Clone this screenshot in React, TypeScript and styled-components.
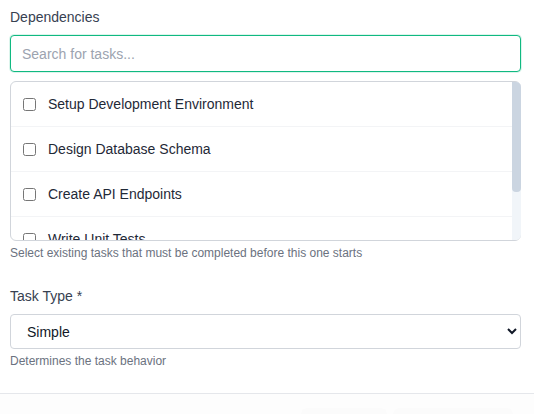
import React from "react";
import styled, { createGlobalStyle } from "styled-components";

const Global = createGlobalStyle`
  html, body { margin: 0; padding: 0; background: #ffffff; }
  body { font-family: "Liberation Sans", Arial, sans-serif; overflow: hidden; }
  * { box-sizing: border-box; }
`;

const Page = styled.div`
  width: 534px;
  height: 414px;
  display: flex;
  flex-direction: column;
  overflow: hidden;
`;

const Body = styled.div`
  padding: 7px 13px 0 10px;
  display: flex;
  flex-direction: column;
`;

const Field = styled.div<{ $mb?: number }>`
  display: flex;
  flex-direction: column;
  margin-bottom: ${(p) => p.$mb ?? 0}px;
`;

const Label = styled.label`
  font-size: 14px;
  line-height: 20px;
  color: #374151;
  margin-bottom: 8px;
`;

const SearchInput = styled.input`
  height: 37px;
  border: 1px solid #10b981;
  border-radius: 4px;
  padding: 0 11px;
  font-family: inherit;
  font-size: 14px;
  color: #111827;
  outline: none;
  box-shadow: 0 0 0 1px rgba(16, 185, 129, 0.15);
  &::placeholder { color: #9ca3af; }
`;

const ListWrap = styled.div`
  position: relative;
  margin-top: 9px;
  height: 160px;
`;

const List = styled.div`
  height: 100%;
  border: 1px solid #d1d5db;
  border-radius: 6px;
  overflow-y: auto;
  scrollbar-width: none;
  &::-webkit-scrollbar { display: none; }
`;

const Track = styled.div`
  position: absolute;
  top: 1px;
  right: 0;
  bottom: 1px;
  width: 9px;
  background: #f1f5f9;
  border-radius: 0 5px 5px 0;
`;

const Thumb = styled.div`
  width: 100%;
  background: #cbd5e1;
  border-radius: 0 5px 4px 4px;
`;

const Row = styled.label`
  display: flex;
  align-items: center;
  gap: 12px;
  height: 45px;
  padding: 0 12px;
  border-bottom: 1px solid #f3f4f6;
  font-size: 14px;
  color: #1f2937;
  cursor: pointer;
  &:last-child { border-bottom: none; }
`;

const Check = styled.input`
  width: 13px;
  height: 13px;
  margin: 0;
  flex: none;
`;

const Help = styled.div`
  font-size: 12px;
  line-height: 16px;
  color: #6b7280;
  margin-top: 4px;
`;

const Select = styled.select`
  height: 35px;
  border: 1px solid #d1d5db;
  border-radius: 4px;
  padding: 0 8px 0 12px;
  font-family: inherit;
  font-size: 14px;
  color: #111827;
  background: #ffffff;
  outline: none;
`;

const Footer = styled.div`
  margin-top: auto;
  border-top: 1px solid #e5e7eb;
  background: #fdfdfd;
  height: 21px;
  display: flex;
  justify-content: flex-end;
  align-items: flex-start;
  gap: 6px;
  padding: 14px 21px 0 0;
`;

const GhostButton = styled.div<{ $w: number }>`
  width: ${(p) => p.$w}px;
  height: 20px;
  border-radius: 6px;
  background: #fbfbfb;
`;

const tasks = [
  "Setup Development Environment",
  "Design Database Schema",
  "Create API Endpoints",
  "Write Unit Tests",
  "Deploy to Staging",
];

export default function App() {
  return (
    <Page>
      <Global />
      <Body>
        <Field $mb={25}>
          <Label>Dependencies</Label>
          <SearchInput placeholder="Search for tasks..." />
          <ListWrap>
            <List>
              {tasks.map((t) => (
                <Row key={t}>
                  <Check type="checkbox" />
                  {t}
                </Row>
              ))}
            </List>
            <Track>
              <Thumb style={{ height: `${Math.round((158 * 158) / 226)}px` }} />
            </Track>
          </ListWrap>
          <Help>Select existing tasks that must be completed before this one starts</Help>
        </Field>
        <Field>
          <Label>Task Type *</Label>
          <Select defaultValue="simple">
            <option value="simple">Simple</option>
            <option value="recurring">Recurring</option>
            <option value="milestone">Milestone</option>
          </Select>
          <Help>Determines the task behavior</Help>
        </Field>
      </Body>
      <Footer>
        <GhostButton $w={86} />
        <GhostButton $w={120} />
      </Footer>
    </Page>
  );
}
